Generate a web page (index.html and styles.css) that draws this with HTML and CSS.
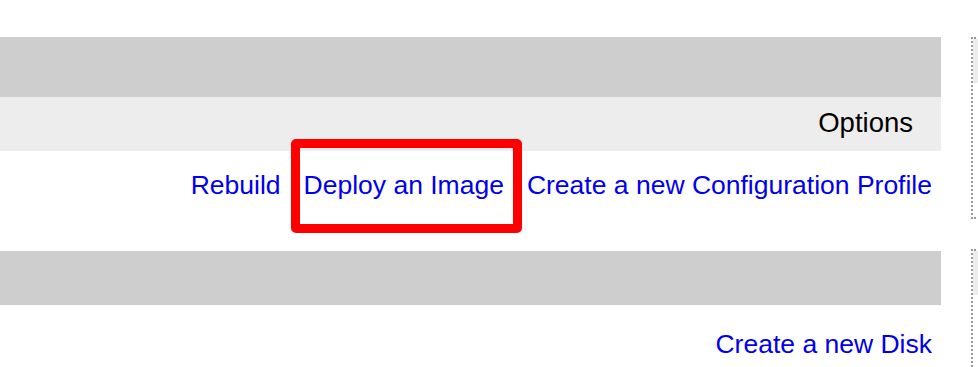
FILE: index.html
```html
<!DOCTYPE html>
<html lang="en">

<head>
    <meta charset="UTF-8">
    <meta name="viewport" content="width=device-width, initial-scale=1.0">
    <title>Linode Options</title>
    <link rel="stylesheet" href="styles.css">
</head>

<body>
    <div class="page">
        <div class="main">
            <div class="panel">
                <div class="bar-dark"></div>
                <div class="bar-light">Options</div>
                <div class="actions first">
                    <a href="#">Rebuild</a>
                    <a href="#">Deploy an Image</a>
                    <a href="#">Create a new Configuration Profile</a>
                </div>
            </div>
            <div class="panel">
                <div class="bar-dark short"></div>
                <div class="actions second">
                    <a href="#">Create a new Disk</a>
                </div>
            </div>
        </div>
        <div class="side">
            <div class="box top-box">
                <div class="box-head"></div>
            </div>
            <div class="box bottom-box">
                <div class="box-head"></div>
            </div>
        </div>
    </div>

    <!-- highlight around the link -->
    <div class="highlight"></div>
</body>

</html>
```

FILE: styles.css
```css
html,
body {
    overflow: hidden;
}

body {
    font-family: "Liberation Sans", Arial, sans-serif;
    font-size: 26.5px;
    color: #000;
    background-color: #fff;
    margin: 0;
    padding: 0;
    width: 978px;
    height: 367px;
    position: relative;
}

.page {
    display: flex;
    height: 367px;
    overflow: hidden;
}

.main {
    width: 941px;
    flex-shrink: 0;
    padding-top: 37px;
}

.bar-dark {
    height: 60px;
    background-color: #cecece;
}

.bar-dark.short {
    height: 54px;
}

.bar-light {
    height: 54px;
    line-height: 52px;
    background-color: #ededed;
    text-align: right;
    padding-right: 28px;
    font-size: 27.5px;
}

.actions {
    display: flex;
    justify-content: flex-end;
    gap: 23px;
    line-height: 30px;
    padding-right: 9px;
    box-sizing: border-box;
}

.actions.first {
    height: 100px;
    padding-top: 19px;
}

.actions.second {
    padding-top: 24px;
}

.actions a {
    color: #0000ee;
    text-decoration: none;
    white-space: nowrap;
}

.side {
    margin-left: 30px;
    width: 7px;
    overflow: hidden;
    flex-shrink: 0;
}

.box {
    width: 300px;
    border: 2px dotted #999;
    box-sizing: border-box;
}

.top-box {
    margin-top: 37px;
    height: 182px;
}

.bottom-box {
    margin-top: 30px;
    height: 118px;
    border-bottom: none;
}

.box-head {
    height: 44px;
    background-color: #ededed;
}

.highlight {
    position: absolute;
    left: 291px;
    top: 139px;
    width: 231px;
    height: 94px;
    border: 9px solid #ff0000;
    border-radius: 5px;
    box-sizing: border-box;
}
```
